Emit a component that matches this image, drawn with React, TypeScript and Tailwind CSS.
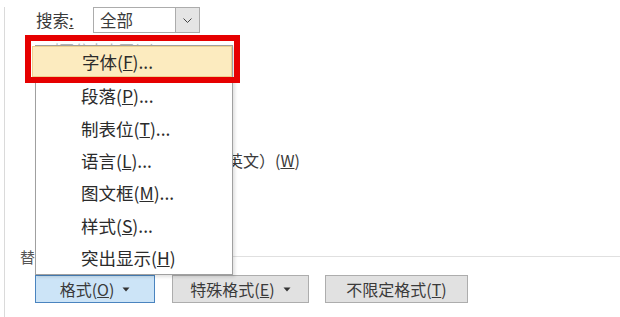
const menuItems = [
  { pre: '段落(', key: 'P', post: ')...' },
  { pre: '制表位(', key: 'T', post: ')...' },
  { pre: '语言(', key: 'L', post: ')...' },
  { pre: '图文框(', key: 'M', post: ')...' },
  { pre: '样式(', key: 'S', post: ')...' },
  { pre: '突出显示(', key: 'H', post: ')' },
];

function Caret() {
  return (
    <svg width="8" height="5" viewBox="0 0 8 5" className="ml-[8px]">
      <path d="M0.5 0.5h7L4 4.5z" fill="#333" />
    </svg>
  );
}

export default function App() {
  return (
    <div className="relative h-[317px] w-[620px] overflow-hidden bg-white text-[#333] font-['Noto_Sans_CJK_SC',sans-serif]">
      <div className="ml-[4px] h-full border-l border-[#dadada]">
        {/* search row */}
        <div className="mt-[7px] flex h-[26px] items-center pl-[31px]">
          <span className="w-[57px] text-[16.5px] leading-none text-[#3a3a3a]">
            搜索<u>:</u>
          </span>
          <div className="flex h-[26px] w-[107px] border border-[#acacac]">
            <span className="flex flex-1 items-center pl-[6px] text-[16.5px] leading-none text-[#3a3a3a]">全部</span>
            <div className="flex w-[24px] items-center justify-center border-l border-[#acacac] bg-[#e5e5e5]">
              <svg width="9" height="5" viewBox="0 0 9 5">
                <path d="M0.5 0.5L4.5 4.5L8.5 0.5" fill="none" stroke="#444" strokeWidth="1" />
              </svg>
            </div>
          </div>
        </div>

        {/* option row mostly hidden behind the menu; only a sliver shows */}
        <div className="mt-[8px] h-[5px] overflow-hidden pl-[50px]">
          <div className="pt-[1px] text-[15px] leading-[16px] text-[#b5b5b5]">|区分大小写(H)</div>
        </div>
        <div className="mt-[104px] flex h-[20px] items-center pl-[222px] text-[16px] leading-none text-[#3a3a3a]">
          英文）(<u>W</u>)
        </div>

        {/* replace group */}
        <div className="mt-[76px] flex h-[20px] items-center pl-[15px]">
          <span className="text-[15px] leading-none text-[#555]">替换</span>
          <div className="ml-[6px] flex-1 border-t border-[#e0e0e0]" />
        </div>

        {/* buttons */}
        <div className="mt-[9px] flex pl-[30px] text-[16px] leading-none text-[#3a3a3a]">
          <div className="flex h-[28px] w-[120px] items-center justify-center border border-[#4a84bf] bg-[#cce4f7]">
            格式(<u>O</u>)<Caret />
          </div>
          <div className="ml-[17px] flex h-[28px] w-[137px] items-center justify-center border border-[#adadad] bg-[#e1e1e1]">
            特殊格式(<u>E</u>)<Caret />
          </div>
          <div className="ml-[16px] flex h-[28px] w-[143px] items-center justify-center border border-[#adadad] bg-[#e1e1e1]">
            不限定格式(<u>T</u>)
          </div>
        </div>
      </div>

      {/* dropdown menu */}
      <div className="absolute left-[35px] top-[45px] z-10 w-[198px] border border-[#a0a0a0] bg-white text-[17.5px] leading-none text-[#2b2b2b] shadow-[2px_2px_3px_rgba(0,0,0,0.12)]">
        <div className="h-[34px]">
          <div className="-ml-[4px] flex h-[31px] items-center border border-[#edd08e] bg-[#fcebbf] pl-[49px]">
            字体(<u>F</u>)...
          </div>
        </div>
        {menuItems.map((it) => (
          <div key={it.key} className="flex h-[32.3px] items-center pl-[45px]">
            {it.pre}
            <u>{it.key}</u>
            {it.post}
          </div>
        ))}
      </div>

      {/* red highlight frame */}
      <div className="pointer-events-none absolute left-[25px] top-[35px] z-20 h-[48px] w-[215px] border-[6px] border-[#e60000]" />
    </div>
  );
}
